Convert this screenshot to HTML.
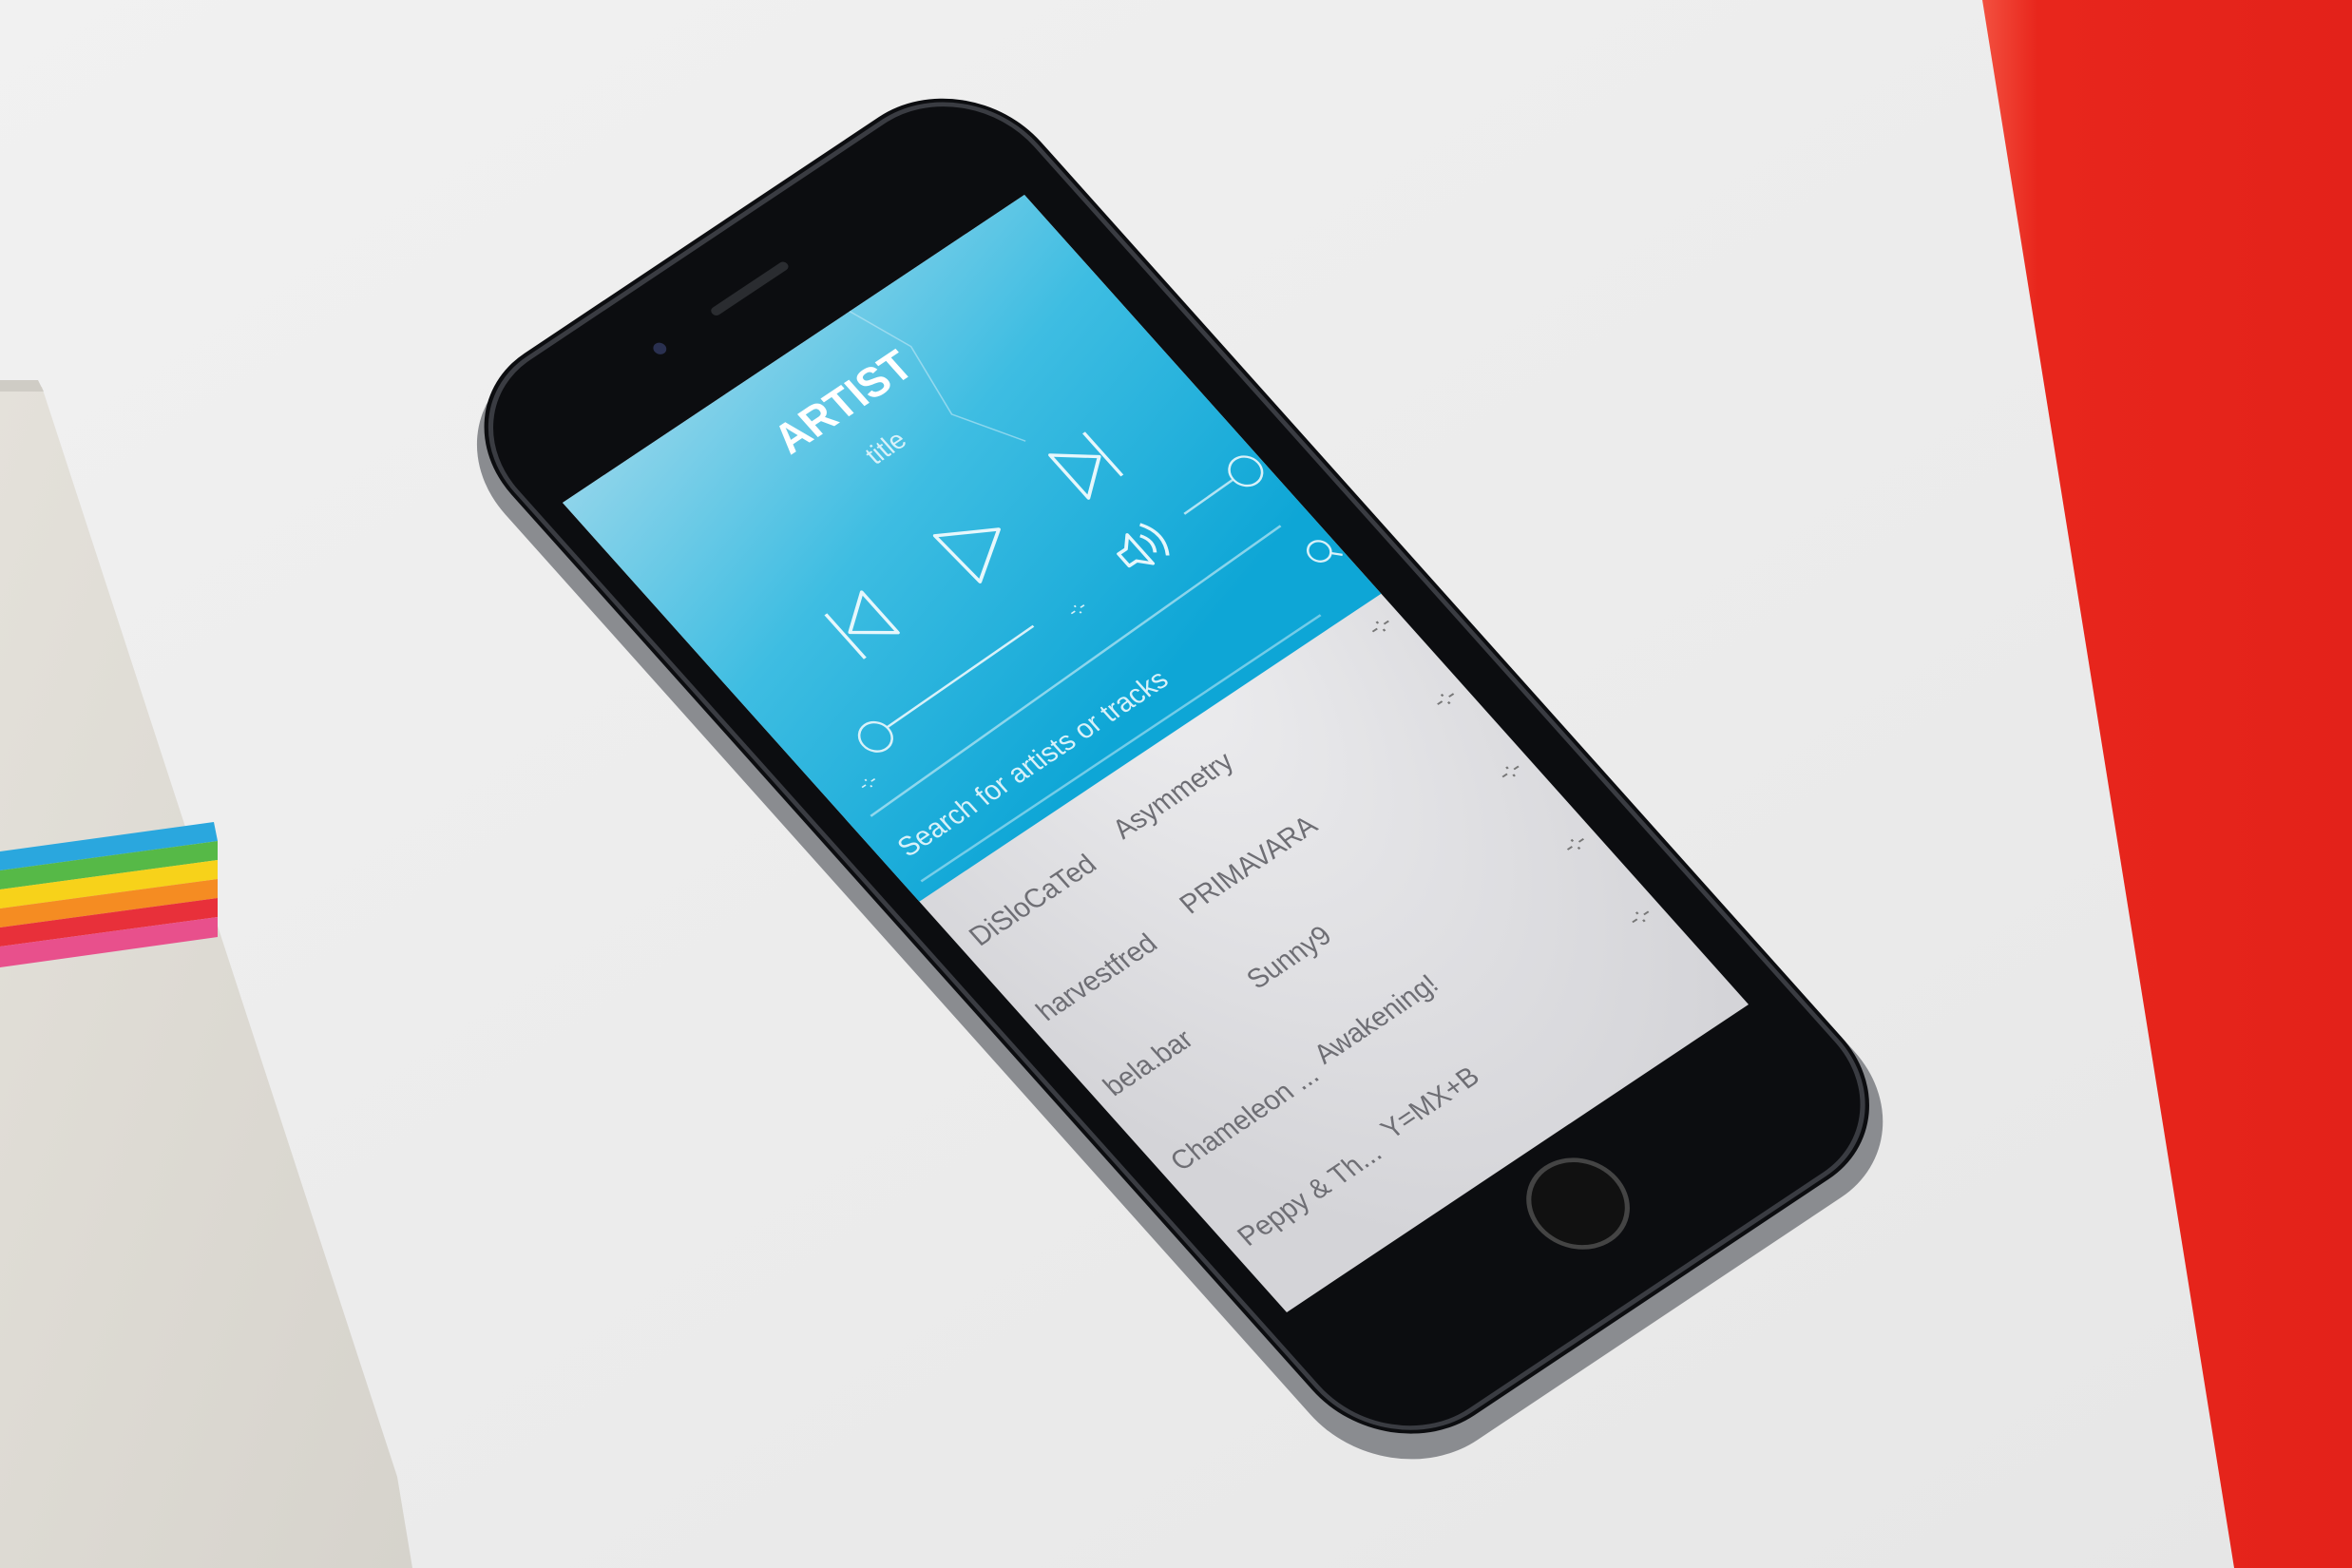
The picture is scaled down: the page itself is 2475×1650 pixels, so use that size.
<!DOCTYPE html>
<html><head><meta charset="utf-8"><style>
html,body{margin:0;padding:0;width:2475px;height:1650px;overflow:hidden;background:#eeeeee}
svg{display:block}
text{font-family:"Liberation Sans",sans-serif}
</style></head><body>
<svg width="2475" height="1650" viewBox="0 0 2475 1650" xmlns="http://www.w3.org/2000/svg">
<defs>
<linearGradient id="bg" x1="0" y1="0" x2="1" y2="1">
<stop offset="0" stop-color="#f1f1f1"/><stop offset="0.6" stop-color="#ebebeb"/><stop offset="1" stop-color="#e6e6e6"/>
</linearGradient>
<linearGradient id="red" x1="0" y1="0" x2="1" y2="0">
<stop offset="0" stop-color="#f3503f"/><stop offset="0.15" stop-color="#e8261c"/><stop offset="1" stop-color="#e3221a"/>
</linearGradient>
<linearGradient id="box" x1="0" y1="0" x2="1" y2="1">
<stop offset="0" stop-color="#e4e1da"/><stop offset="1" stop-color="#d6d3cc"/>
</linearGradient>
<linearGradient id="blue" x1="0" y1="0" x2="0.3" y2="1">
<stop offset="0" stop-color="#8ed4ea"/><stop offset="0.45" stop-color="#3ebde2"/><stop offset="1" stop-color="#0ea6d6"/>
</linearGradient>
<radialGradient id="grey" cx="0.6" cy="0.4" r="0.7">
<stop offset="0" stop-color="#eeeef0"/><stop offset="1" stop-color="#d4d4d8"/>
</radialGradient>
</defs>
<rect width="2475" height="1650" fill="url(#bg)"/>
<polygon points="2086,0 2475,0 2475,1650 2351,1650" fill="url(#red)"/>
<polygon points="0,407 44,407 418,1554 434,1650 0,1650" fill="url(#box)"/>
<polygon points="0,400 40,400 46,412 0,412" fill="#cfccc5"/>
<g>
<polygon points="0,896 225,865 229,885 0,916" fill="#2aa7de"/>
<polygon points="0,916 229,885 229,905 0,936" fill="#56b947"/>
<polygon points="0,936 229,905 229,925 0,956" fill="#f7d21a"/>
<polygon points="0,956 229,925 229,945 0,976" fill="#f58c22"/>
<polygon points="0,976 229,945 229,965 0,996" fill="#e8303a"/>
<polygon points="0,996 229,965 229,986 0,1018" fill="#e8508c"/>
</g>
<g transform="matrix(1.3135,-0.8757,1.1206,1.2529,592,529)">
<rect x="-34" y="-86" width="436" height="900" rx="72" fill="#8a8c90"/>
<rect x="-22" y="-92" width="424" height="892" rx="70" fill="#0c0d10"/>
<rect x="-18" y="-88" width="416" height="884" rx="66" fill="none" stroke="#3a3c42" stroke-width="3"/>
<rect x="160" y="-50" width="60" height="6" rx="3" fill="#2a2c30"/>
<circle cx="118" cy="-47" r="4" fill="#2a3050"/>
<circle cx="195" cy="725" r="30" fill="#111" stroke="#444" stroke-width="3"/>
<rect x="0" y="0" width="370" height="680" fill="url(#grey)"/>
<rect x="0" y="0" width="370" height="335" fill="url(#blue)"/>
<path d="M230 0 L245 40 L235 90 L260 130" stroke="#bfe8f5" stroke-width="1" fill="none" opacity="0.6"/>
<text x="186" y="55" font-size="28" font-weight="bold" fill="#fff" text-anchor="middle">ARTIST</text>
<text x="187" y="90" font-size="17" fill="#d8f1f9" text-anchor="middle">title</text>
<g stroke="#e6f7fc" stroke-width="2.2" fill="none" stroke-linejoin="round">
<path d="M82 151 L82 188 M110 152 L110 186 L86 169 Z"/>
<path d="M172 148 L174 188 L207 167 Z"/>
<path d="M293 146 L293 182 M266 146 L266 182 L290 164 Z"/>
<path d="M256 222 L262 222 L269 215 L269 239 L262 232 L256 232 Z M275 220 Q280 227 275 234 M280 214 Q289 227 280 240"/>
</g>
<g stroke="#d8f1f9" stroke-width="1.5" fill="none">
<circle cx="52" cy="233" r="10"/>
<line x1="62" y1="232" x2="181" y2="230"/>
<circle cx="357" cy="223" r="10"/>
<line x1="307" y1="224" x2="347" y2="223" opacity="0.8"/>
<line x1="14" y1="273" x2="350" y2="264" opacity="0.6"/>
<circle cx="358" cy="291" r="7"/>
<line x1="363" y1="296" x2="368" y2="301"/>
<line x1="10" y1="325" x2="330" y2="325" opacity="0.5"/>
</g>
<text x="22" y="258" font-size="12" fill="#d8f1f9">-:-</text>
<text x="205" y="240" font-size="12" fill="#d8f1f9">-:-</text>
<text x="14" y="308" font-size="18" fill="#d8f1f9">Search for artists or tracks</text>
<g font-size="18" fill="#6e6e74">
<text x="10" y="380">DiSloCaTed</text><text x="130" y="374">Asymmetry</text>
<text x="10" y="443">harvestfred</text><text x="130" y="437">PRIMAVARA</text>
<text x="10" y="506">bela.bar</text><text x="130" y="500">Sunny9</text>
<text x="10" y="569">Chameleon ...</text><text x="130" y="563">Awakening!</text>
<text x="10" y="632">Peppy &amp; Th...</text><text x="130" y="626">Y=MX+B</text>
</g>
<g font-size="15" fill="#777">
<text x="348" y="356">-:-</text><text x="348" y="417">-:-</text><text x="348" y="478">-:-</text><text x="348" y="539">-:-</text><text x="348" y="600">-:-</text>
</g>
</g>
</svg>
</body></html>
